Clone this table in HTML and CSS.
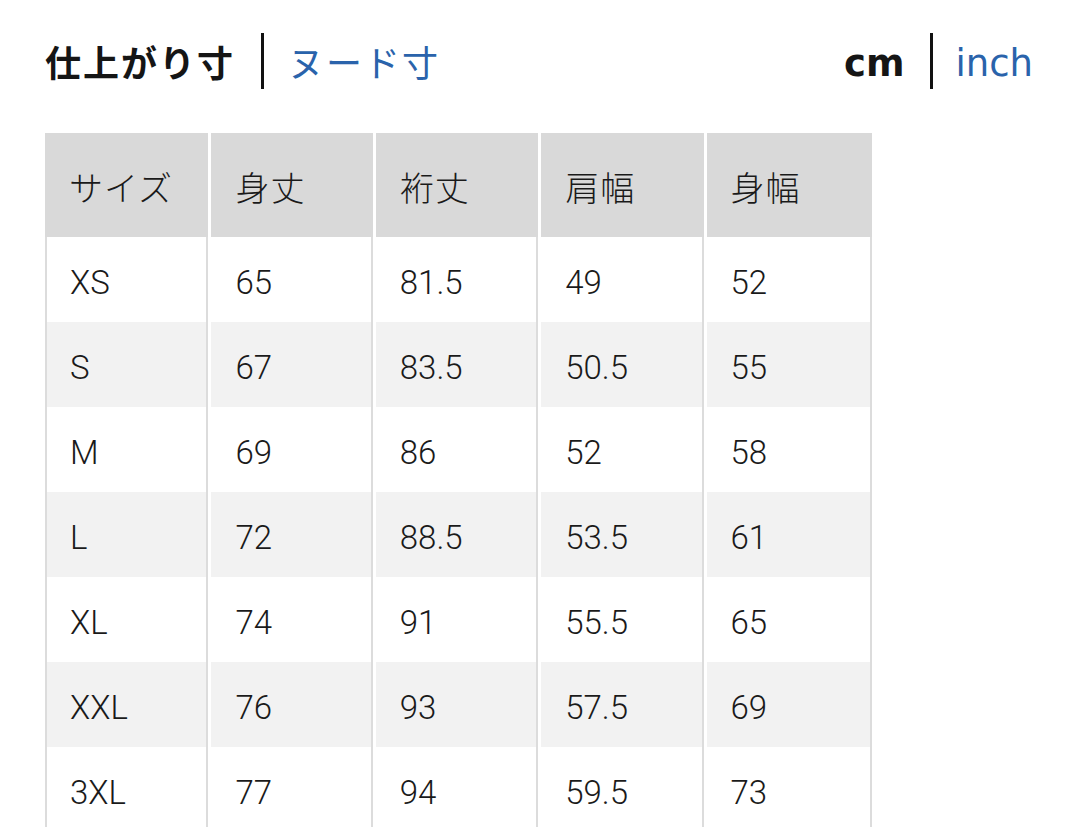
FILE: index.html
```html
<!DOCTYPE html>
<html lang="ja">
<head>
<meta charset="utf-8">
<link rel="stylesheet" href="styles.css">
</head>
<body>
<div class="page">
  <div class="toolbar">
    <div class="switch">
      <span class="opt active jp">仕上がり寸</span>
      <span class="sep"></span>
      <span class="opt link jp">ヌード寸</span>
    </div>
    <div class="switch units">
      <span class="opt active unit">cm</span>
      <span class="sep"></span>
      <span class="opt link unit">inch</span>
    </div>
  </div>
  <table class="sizes">
    <colgroup>
      <col class="c1"><col class="c2"><col class="c3"><col class="c4"><col class="c5">
    </colgroup>
    <thead>
      <tr><th>サイズ</th><th>身丈</th><th>裄丈</th><th>肩幅</th><th>身幅</th></tr>
    </thead>
    <tbody>
      <tr><td>XS</td><td>65</td><td>81.5</td><td>49</td><td>52</td></tr>
      <tr><td>S</td><td>67</td><td>83.5</td><td>50.5</td><td>55</td></tr>
      <tr><td>M</td><td>69</td><td>86</td><td>52</td><td>58</td></tr>
      <tr><td>L</td><td>72</td><td>88.5</td><td>53.5</td><td>61</td></tr>
      <tr><td>XL</td><td>74</td><td>91</td><td>55.5</td><td>65</td></tr>
      <tr><td>XXL</td><td>76</td><td>93</td><td>57.5</td><td>69</td></tr>
      <tr><td>3XL</td><td>77</td><td>94</td><td>59.5</td><td>73</td></tr>
    </tbody>
  </table>
</div>
</body>
</html>
```

FILE: styles.css
```css
html, body {
  margin: 0;
  padding: 0;
  background: #fff;
}
.page {
  padding: 30px 47px 0 45px;
}
.toolbar {
  display: flex;
  justify-content: space-between;
  align-items: center;
  height: 62px;
}
.switch {
  display: flex;
  align-items: center;
}
.opt {
  line-height: 1;
}
.jp {
  font-family: "Noto Sans CJK JP", sans-serif;
  font-size: 36px;
  letter-spacing: 2px;
}
.unit {
  font-family: "DejaVu Sans", sans-serif;
  font-size: 37px;
  padding-top: 4px;
}
.active {
  color: #151515;
  font-weight: 700;
}
.link {
  color: #2a63ab;
  font-weight: 400;
}
.sep {
  width: 3px;
  height: 56px;
  background: #111;
  margin: 0 24px 0 26px;
}
.units .sep {
  margin: 0 22px 0 26px;
}
.sizes {
  margin-top: 41px;
  margin-left: -3px;
  border-collapse: separate;
  border-spacing: 3px 0;
  table-layout: fixed;
  width: 833px;
}
.c1 { width: 163px; }
.c2 { width: 161px; }
.c3 { width: 162px; }
.c4 { width: 162px; }
.c5 { width: 165px; }
.sizes th, .sizes td {
  text-align: left;
  padding: 0 0 0 24px;
  color: #1a1a1a;
  box-sizing: border-box;
}
.sizes th {
  height: 104px;
  background: #d9d9d9;
  font-family: "Noto Sans CJK JP", sans-serif;
  font-weight: 300;
  font-size: 34px;
  letter-spacing: 1px;
  padding-top: 2px;
}
.sizes td {
  height: 85px;
  font-family: "Roboto", sans-serif;
  font-weight: 300;
  font-size: 33px;
  border-right: 2px solid #dcdcdc;
  padding-top: 6px;
}
.sizes td:first-child {
  border-left: 2px solid #dcdcdc;
  padding-left: 23px;
}
.sizes tbody tr:nth-child(even) td {
  background: #f2f2f2;
}
```
